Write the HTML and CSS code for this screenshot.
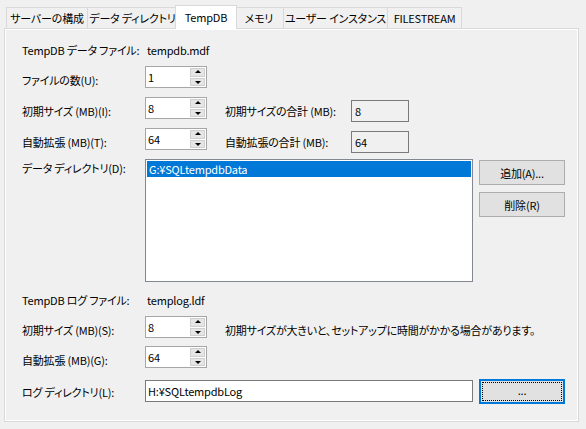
FILE: index.html
```html
<!DOCTYPE html>
<html lang="ja">
<head>
<meta charset="utf-8">
<link rel="stylesheet" href="styles.css">
</head>
<body>
<div class="window">
  <div class="tabs">
    <div class="tab t1">サーバーの構成</div>
    <div class="tab t2">データ ディレクトリ</div>
    <div class="tab t3 active">TempDB</div>
    <div class="tab t4">メモリ</div>
    <div class="tab t5">ユーザー インスタンス</div>
    <div class="tab t6">FILESTREAM</div>
  </div>
  <div class="panel">
    <div class="row info first">
      <div class="label">TempDB データ ファイル:</div>
      <div class="value">tempdb.mdf</div>
    </div>
    <div class="row ctl">
      <div class="label">ファイルの数(U):</div>
      <div class="spin"><span class="val">1</span><span class="btns"><span class="up"></span><span class="down"></span></span></div>
    </div>
    <div class="row ctl">
      <div class="label">初期サイズ (MB)(I):</div>
      <div class="spin"><span class="val">8</span><span class="btns"><span class="up"></span><span class="down"></span></span></div>
      <div class="tlabel">初期サイズの合計 (MB):</div>
      <div class="total">8</div>
    </div>
    <div class="row ctl">
      <div class="label">自動拡張 (MB)(T):</div>
      <div class="spin"><span class="val">64</span><span class="btns"><span class="up"></span><span class="down"></span></span></div>
      <div class="tlabel">自動拡張の合計 (MB):</div>
      <div class="total">64</div>
    </div>
    <div class="row listrow">
      <div class="label top">データ ディレクトリ(D):</div>
      <div class="list"><div class="item sel">G:¥SQLtempdbData</div></div>
      <div class="buttons">
        <div class="btn">追加(A)...</div>
        <div class="btn">削除(R)</div>
      </div>
    </div>
    <div class="row info log">
      <div class="label">TempDB ログ ファイル:</div>
      <div class="value">templog.ldf</div>
    </div>
    <div class="row ctl">
      <div class="label">初期サイズ (MB)(S):</div>
      <div class="spin"><span class="val">8</span><span class="btns"><span class="up"></span><span class="down"></span></span></div>
      <div class="note">初期サイズが大きいと、セットアップに時間がかかる場合があります。</div>
    </div>
    <div class="row ctl g8">
      <div class="label">自動拡張 (MB)(G):</div>
      <div class="spin"><span class="val">64</span><span class="btns"><span class="up"></span><span class="down"></span></span></div>
    </div>
    <div class="row dirrow">
      <div class="label mid">ログ ディレクトリ(L):</div>
      <div class="textbox">H:¥SQLtempdbLog</div>
      <div class="btn focus"><span>...</span></div>
    </div>
  </div>
</div>
</body>
</html>
```

FILE: styles.css
```css
* { box-sizing: border-box; }
html, body {
  margin: 0;
  padding: 0;
  background: #f0f0f0;
}
body {
  width: 586px;
  height: 429px;
  overflow: hidden;
  font-family: "Noto Sans CJK JP", "Noto Sans", sans-serif;
  font-feature-settings: "palt";
  font-size: 11px;
  letter-spacing: -0.2px;
  line-height: 16px;
  color: #000;
}
.window {
  padding-top: 5px;
}
.tabs {
  display: flex;
  align-items: flex-end;
  height: 24px;
  padding-left: 6px;
  position: relative;
  z-index: 2;
}
.tab {
  height: 21px;
  margin-bottom: 1px;
  border: 1px solid #d9d9d9;
  border-bottom: none;
  border-right: none;
  background: #f0f0f0;
  display: flex;
  align-items: center;
  justify-content: center;
  white-space: nowrap;
  padding-bottom: 1px;
  flex: none;
}
.t1 { width: 81px; }
.t2 { width: 90px; }
.t3 { width: 58px; }
.t4 { width: 48px; }
.t5 { width: 104px; }
.t6 { width: 75px; border-right: 1px solid #d9d9d9; }
.tab.active {
  height: 24px;
  margin-bottom: 0;
  background: #ffffff;
  border-right: 1px solid #d9d9d9;
  margin-left: -2px;
  margin-right: -2px;
  width: 62px;
  position: relative;
  z-index: 3;
  padding-bottom: 2px;
}
.tab.t4 { border-left: none; }
.panel {
  margin-left: 4px;
  width: 575px;
  height: 394px;
  margin-top: -1px;
  border: 1px solid #d9d9d9;
  box-shadow: inset 0 0 0 1px #ffffff;
  padding: 13px 0 0 17px;
  display: flex;
  flex-direction: column;
}
.row {
  display: flex;
  align-items: flex-start;
}
.label {
  width: 123px;
  flex: none;
  white-space: nowrap;
}
.info .label { width: 125px; }
.info { height: 16px; }
.log { margin-top: 10px; }
.ctl { margin-top: 8px; height: 22px; }
.ctl + .ctl { margin-top: 9px; }
.ctl.g8 { margin-top: 8px; }
.ctl .label { padding-top: 6px; }
.spin {
  width: 62px;
  height: 22px;
  background: #fff;
  border: 1px solid #a6a6a6;
  display: flex;
  justify-content: space-between;
  flex: none;
}
.spin .val {
  padding: 2px 0 0 2px;
  line-height: 16px;
}
.btns {
  width: 15px;
  margin: 1px 1px 1px 0;
  display: flex;
  flex-direction: column;
  gap: 1px;
}
.btns span {
  flex: 1;
  background: #e5e5e5;
  border: 1px solid #cfcfcf;
  position: relative;
}
.btns .up::after, .btns .down::after {
  content: "";
  position: absolute;
  left: 50%;
  top: 50%;
  margin-left: -3px;
  border-left: 3px solid transparent;
  border-right: 3px solid transparent;
}
.btns .up::after {
  margin-top: -2px;
  border-bottom: 3px solid #000;
}
.btns .down::after {
  margin-top: -1px;
  border-top: 3px solid #000;
}
.tlabel {
  margin-left: 18px;
  width: 126px;
  padding-top: 6px;
  white-space: nowrap;
  flex: none;
}
.total {
  margin-top: 3px;
  width: 58px;
  height: 22px;
  border: 1px solid #7a7a7a;
  padding: 2px 0 0 3px;
  background: #f0f0f0;
}
.note {
  margin-left: 18px;
  padding-top: 6px;
  white-space: nowrap;
}
.listrow { margin-top: 9px; }
.label.top { padding-top: 1px; }
.list {
  width: 328px;
  height: 123px;
  background: #fff;
  border: 1px solid #828790;
  padding: 1px;
}
.item {
  height: 16px;
  padding-left: 2px;
  line-height: 16px;
}
.item.sel {
  background: #0078d7;
  color: #fff;
}
.buttons {
  margin-left: 6px;
  margin-top: 1px;
  display: flex;
  flex-direction: column;
  gap: 7px;
}
.btn {
  width: 86px;
  height: 25px;
  background: #e1e1e1;
  border: 1px solid #adadad;
  display: flex;
  align-items: center;
  justify-content: center;
}
.dirrow {
  margin-top: 10px;
  align-items: center;
  height: 26px;
}
.label.mid { padding-top: 1px; }
.textbox {
  width: 328px;
  height: 22px;
  background: #fff;
  border: 1px solid #7a7a7a;
  padding: 2px 0 0 2px;
}
.btn.focus {
  margin-left: 6px;
  border: 2px solid #0078d7;
  padding: 1px;
}
.btn.focus span {
  width: 100%;
  height: 100%;
  border: 1px dotted #000;
  display: flex;
  align-items: center;
  justify-content: center;
  padding-bottom: 2px;
}
```
